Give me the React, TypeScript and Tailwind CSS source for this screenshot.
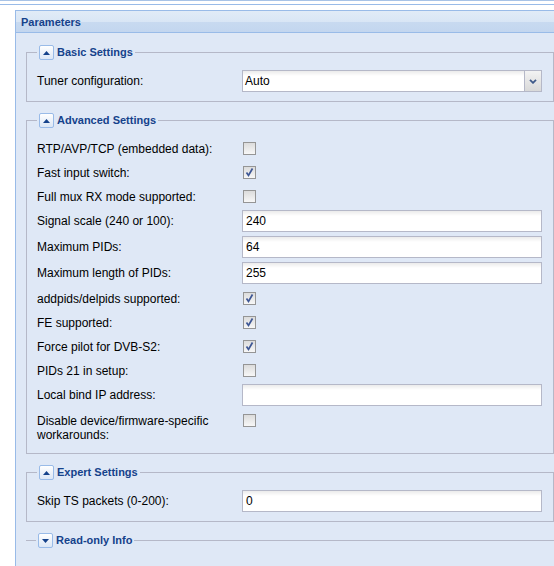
import React from 'react';

type Row =
  | { kind: 'check'; label: string; checked: boolean }
  | { kind: 'text'; label: string; value: string };

const advanced: Row[] = [
  { kind: 'check', label: 'RTP/AVP/TCP (embedded data):', checked: false },
  { kind: 'check', label: 'Fast input switch:', checked: true },
  { kind: 'check', label: 'Full mux RX mode supported:', checked: false },
  { kind: 'text', label: 'Signal scale (240 or 100):', value: '240' },
  { kind: 'text', label: 'Maximum PIDs:', value: '64' },
  { kind: 'text', label: 'Maximum length of PIDs:', value: '255' },
  { kind: 'check', label: 'addpids/delpids supported:', checked: true },
  { kind: 'check', label: 'FE supported:', checked: true },
  { kind: 'check', label: 'Force pilot for DVB-S2:', checked: true },
  { kind: 'check', label: 'PIDs 21 in setup:', checked: false },
  { kind: 'text', label: 'Local bind IP address:', value: '' },
  { kind: 'check', label: 'Disable device/firmware-specific workarounds:', checked: false },
];

function Toggle({ open }: { open: boolean }) {
  return (
    <span className="w-[15px] h-[15px] rounded-[2px] border border-[#99bbe8] bg-gradient-to-b from-white to-[#dce7f6] flex items-center justify-center">
      <svg width="7" height="4" viewBox="0 0 7 4">
        {open ? <path d="M3.5 0 L7 4 L0 4 Z" fill="#15428b" /> : <path d="M0 0 L7 0 L3.5 4 Z" fill="#15428b" />}
      </svg>
    </span>
  );
}

function FieldSet({ title, open = true, children }: { title: string; open?: boolean; children?: React.ReactNode }) {
  return (
    <fieldset
      className={
        open
          ? 'w-[528px] border border-[#b5b8c8] px-[10px] pt-[10px] pb-[5px] mb-[11px]'
          : 'w-[528px] border-t border-[#b5b8c8] px-[10px] pt-0 pb-0'
      }
    >
      <legend className="px-[2px] h-[15px]">
        <span className="flex items-center h-[15px]">
          <Toggle open={open} />
          <span className="ml-[3px] font-bold text-[11px] leading-[15px] text-[#15428b]">{title}</span>
        </span>
      </legend>
      {children}
    </fieldset>
  );
}

function Label({ children }: { children: React.ReactNode }) {
  return <div className="w-[205px] pt-[4px] pb-[2px] pr-[3px] leading-[14px] text-black">{children}</div>;
}

function TextInput({ value }: { value: string }) {
  return (
    <div className="w-[300px] h-[22px] border border-[#b5b8c8] bg-[linear-gradient(to_bottom,#ebebeb,#ffffff_5px)] px-[3px] pt-px leading-[19px] text-black">
      {value}
    </div>
  );
}

function Checkbox({ checked }: { checked: boolean }) {
  return (
    <div className="ml-px mt-[4px] w-[13px] h-[13px] border border-[#959595] bg-gradient-to-b from-[#dcdcdc] to-[#f7f7f7] flex items-center justify-center">
      {checked && (
        <svg width="11" height="11" viewBox="0 0 11 11">
          <path d="M2.5 5.5 L4.5 8.5 L8.5 1.5" fill="none" stroke="#3e5795" strokeWidth="1.7" />
        </svg>
      )}
    </div>
  );
}

function FormRow({ row }: { row: Row }) {
  return (
    <div className="flex mb-[4px]">
      <Label>{row.label}</Label>
      {row.kind === 'check' ? <Checkbox checked={row.checked} /> : <TextInput value={row.value} />}
    </div>
  );
}

export default function App() {
  return (
    <div className="w-[554px] h-[566px] overflow-hidden bg-white font-['Liberation_Sans',Arial,sans-serif] text-[12px]">
      <div className="h-px bg-[#a8c3e6]" />
      <div className="h-[3px]" />
      <div className="h-px bg-[#99bbe8]" />
      <div className="h-[5px]" />
      <div className="ml-[15px] w-[570px] border-l border-t border-[#99bbe8]">
        <div className="h-[22px] border-b border-[#99bbe8] bg-[linear-gradient(to_bottom,#e1ebf7,#d9e6f5_50%,#c8daf0_52%,#c3d6ef)] pl-[5px] pt-[1px] font-bold text-[11px] leading-[21px] text-[#15428b]">
          Parameters
        </div>
        <div className="bg-[#dfe8f6] pt-[12px] pl-[10px] h-[560px]">
          <FieldSet title="Basic Settings">
            <div className="flex mb-[4px]">
              <Label>Tuner configuration:</Label>
              <div className="w-[300px] h-[22px] flex border border-[#b5b8c8] bg-[linear-gradient(to_bottom,#ebebeb,#ffffff_5px)]">
                <div className="flex-1 px-[2px] pt-px leading-[19px] text-black">Auto</div>
                <div className="w-[17px] h-full border-l border-[#b5b8c8] bg-gradient-to-b from-[#f3f3f3] to-[#d9d9d9] flex items-center justify-center">
                  <svg width="8" height="5" viewBox="0 0 8 5">
                    <path d="M1 0.8 L4 3.8 L7 0.8" fill="none" stroke="#3f5a8a" strokeWidth="1.8" />
                  </svg>
                </div>
              </div>
            </div>
          </FieldSet>
          <FieldSet title="Advanced Settings">
            {advanced.map((r, i) => (
              <FormRow key={i} row={r} />
            ))}
          </FieldSet>
          <FieldSet title="Expert Settings">
            <FormRow row={{ kind: 'text', label: 'Skip TS packets (0-200):', value: '0' }} />
          </FieldSet>
          <FieldSet title="Read-only Info" open={false} />
        </div>
      </div>
    </div>
  );
}
